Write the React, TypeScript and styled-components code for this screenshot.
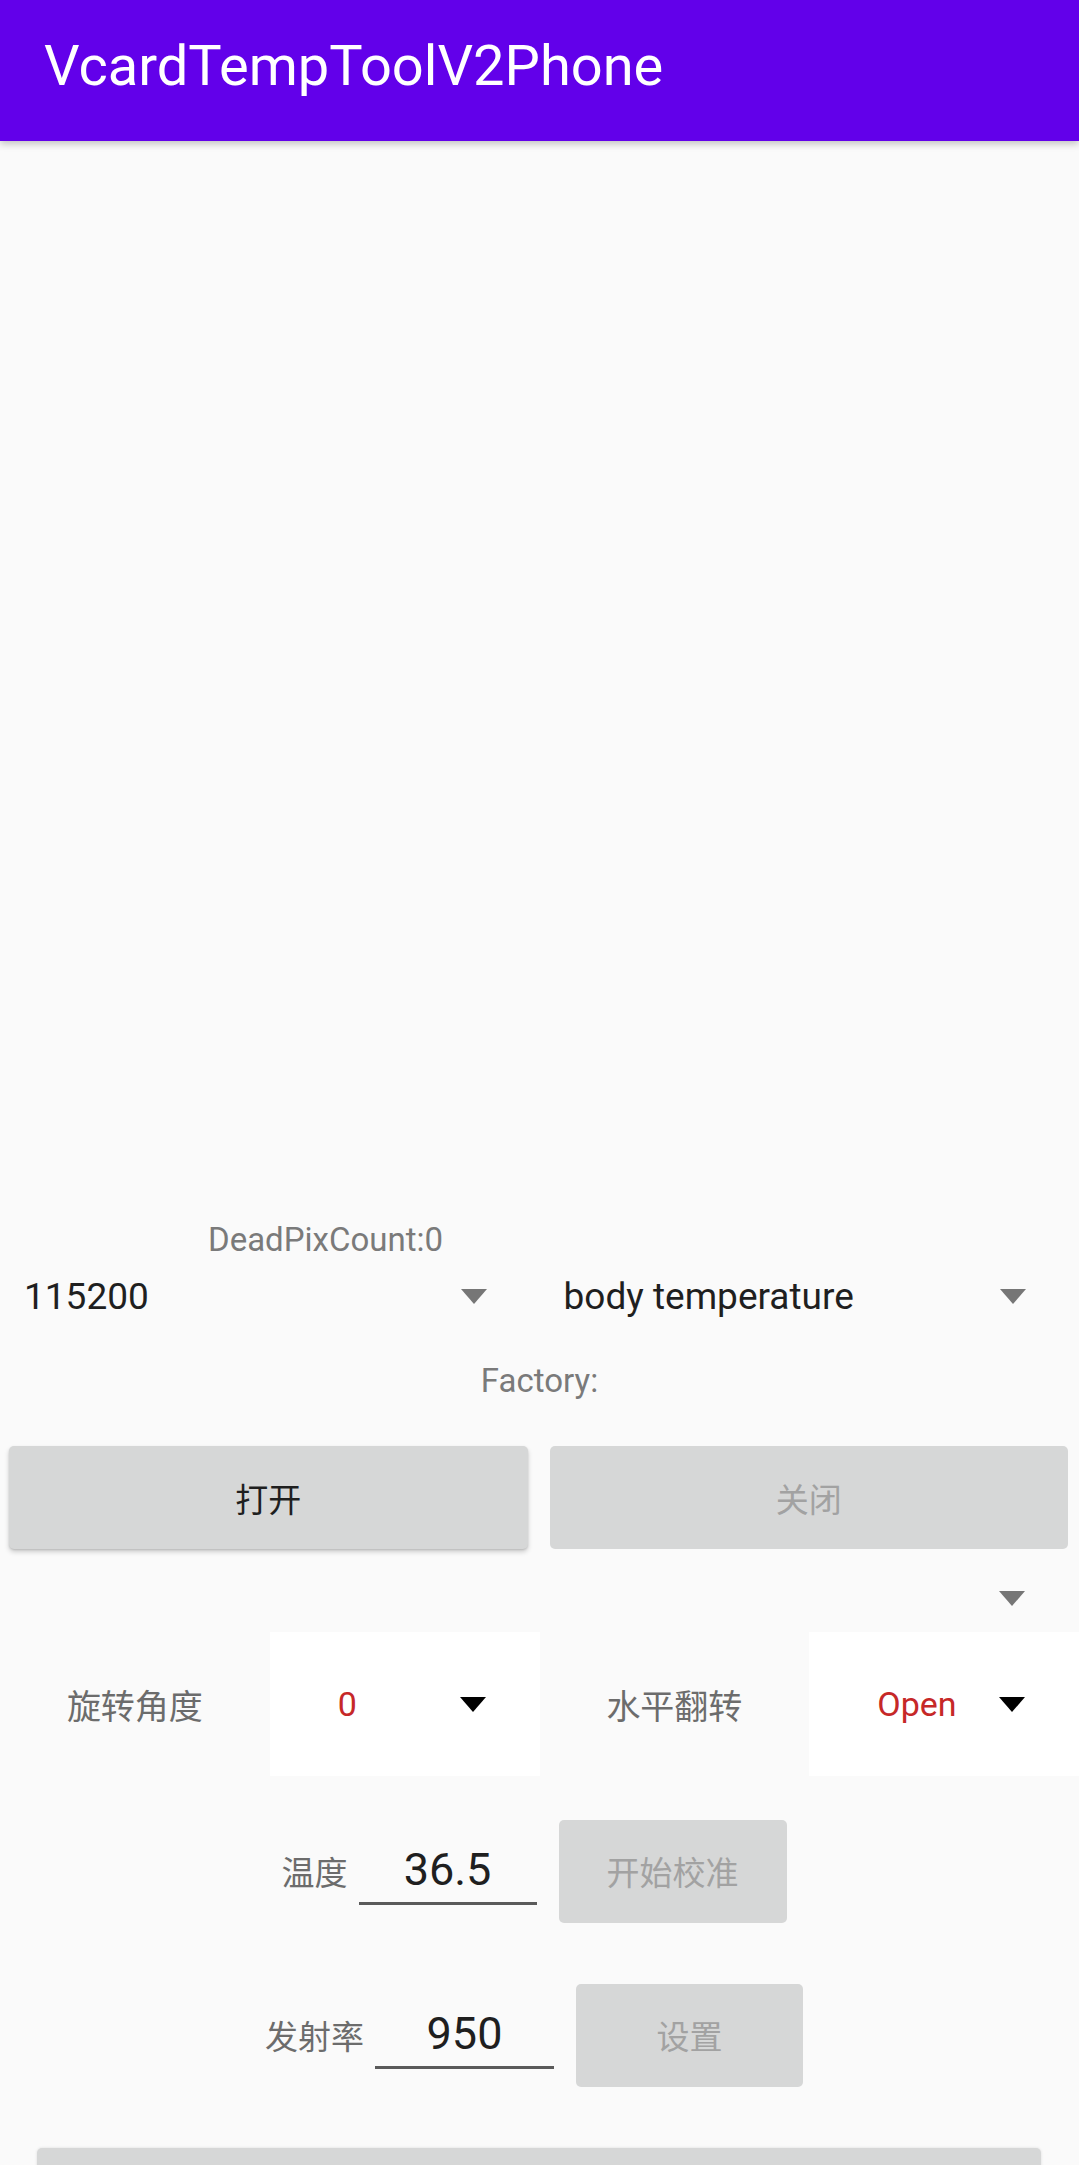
import React from "react";
import styled, { createGlobalStyle } from "styled-components";

const GlobalStyle = createGlobalStyle`
  html, body {
    margin: 0;
    padding: 0;
    background: #fafafa;
    overflow: hidden;
  }
  * { box-sizing: border-box; }
`;

const FONT = `Roboto, "Noto Sans CJK SC", "Noto Sans", sans-serif`;

const Screen = styled.div`
  width: 1079px;
  height: 2165px;
  overflow: hidden;
  background: #fafafa;
  font-family: ${FONT};
  display: flex;
  flex-direction: column;
`;

const AppBar = styled.header`
  height: 141px;
  flex: none;
  background: #6200ea;
  display: flex;
  align-items: center;
  padding: 0 0 10px 44px;
  box-shadow: 0 3px 7px rgba(0, 0, 0, 0.22);
  position: relative;
  z-index: 2;
`;

const Title = styled.h1`
  margin: 0;
  color: #ffffff;
  font-family: ${FONT};
  font-weight: 400;
  font-size: 56px;
  line-height: 1;
`;

const Preview = styled.div`
  height: 1074px;
  flex: none;
`;

const Row = styled.div<{ $h: number; $mt?: number }>`
  height: ${(p) => p.$h}px;
  margin-top: ${(p) => p.$mt ?? 0}px;
  flex: none;
  display: flex;
  align-items: center;
`;

const InfoText = styled.span<{ $pl?: number }>`
  font-size: 33px;
  line-height: 1;
  color: #7a7a7a;
  padding-left: ${(p) => p.$pl ?? 0}px;
`;

const CenterRow = styled(Row)`
  justify-content: center;
`;

const SpinnerHalf = styled.div`
  flex: 1;
  height: 100%;
  display: flex;
  align-items: center;
  justify-content: space-between;
  padding: 0 53px 0 24px;
`;

const SpinnerValue = styled.span`
  font-size: 37px;
  line-height: 1;
  color: #1f1f1f;
`;

const Caret = styled.span<{ $color: string }>`
  width: 0;
  height: 0;
  flex: none;
  border-left: 13px solid transparent;
  border-right: 13px solid transparent;
  border-top: 15px solid ${(p) => p.$color};
`;

const ButtonRow = styled.div`
  flex: none;
  display: flex;
  gap: 22px;
  padding: 16px 11px 16px 9px;
`;

const Button = styled.button<{ $disabled?: boolean; $w?: number }>`
  flex: ${(p) => (p.$w ? "none" : "1")};
  width: ${(p) => (p.$w ? `${p.$w}px` : "auto")};
  height: 103px;
  border: none;
  border-radius: 5px;
  background: #d6d7d7;
  font-family: ${FONT};
  font-size: 33px;
  color: ${(p) => (p.$disabled ? "#a2a2a2" : "#1f1f1f")};
  box-shadow: ${(p) =>
    p.$disabled
      ? "none"
      : "0 3px 5px rgba(0,0,0,0.18), 0 1px 2px rgba(0,0,0,0.12)"};
  padding: 0;
  display: flex;
  align-items: center;
  justify-content: center;
`;

const LoneSpinner = styled(Row)`
  justify-content: flex-end;
  padding-right: 54px;
`;

const OptionsGrid = styled.div`
  height: 144px;
  flex: none;
  display: grid;
  grid-template-columns: repeat(4, 1fr);
`;

const OptionLabel = styled.div`
  display: flex;
  align-items: center;
  justify-content: center;
  font-size: 34px;
  color: #6c6c6c;
`;

const OptionSpinner = styled.div`
  background: #ffffff;
  display: flex;
  align-items: center;
  justify-content: space-between;
  padding: 0 54px 0 68px;
`;

const OptionValue = styled.span`
  font-size: 34px;
  line-height: 1;
  color: #c62828;
`;

const FormRow = styled.div<{ $mt: number }>`
  flex: none;
  margin-top: ${(p) => p.$mt}px;
  height: 102px;
  display: flex;
  align-items: center;
  justify-content: center;
  padding-right: 11px;
`;

const FieldLabel = styled.span`
  font-size: 33px;
  color: #6c6c6c;
  margin-right: 11px;
`;

const EditField = styled.div<{ $w: number }>`
  width: ${(p) => p.$w}px;
  height: 68px;
  border-bottom: 3px solid #5a5a5a;
  display: flex;
  align-items: center;
  justify-content: center;
  font-size: 45px;
  color: #1f1f1f;
  margin-right: 22px;
`;

const WideButton = styled.div`
  flex: none;
  margin: 62px 38px 0 37px;
  height: 103px;
  border-radius: 5px;
  background: #d6d7d7;
  box-shadow: 0 0 3px rgba(0, 0, 0, 0.12);
`;

export default function App() {
  return (
    <Screen>
      <GlobalStyle />
      <AppBar>
        <Title>VcardTempToolV2Phone</Title>
      </AppBar>
      <Preview />
      <Row $h={48}>
        <InfoText $pl={208}>DeadPixCount:0</InfoText>
      </Row>
      <Row $h={67}>
        <SpinnerHalf>
          <SpinnerValue>115200</SpinnerValue>
          <Caret $color="#767676" />
        </SpinnerHalf>
        <SpinnerHalf>
          <SpinnerValue>body temperature</SpinnerValue>
          <Caret $color="#767676" />
        </SpinnerHalf>
      </Row>
      <CenterRow $h={100}>
        <InfoText>Factory:</InfoText>
      </CenterRow>
      <ButtonRow>
        <Button>打开</Button>
        <Button $disabled>关闭</Button>
      </ButtonRow>
      <LoneSpinner $h={67}>
        <Caret $color="#767676" />
      </LoneSpinner>
      <OptionsGrid>
        <OptionLabel>旋转角度</OptionLabel>
        <OptionSpinner>
          <OptionValue>0</OptionValue>
          <Caret $color="#000000" />
        </OptionSpinner>
        <OptionLabel>水平翻转</OptionLabel>
        <OptionSpinner>
          <OptionValue>Open</OptionValue>
          <Caret $color="#000000" />
        </OptionSpinner>
      </OptionsGrid>
      <FormRow $mt={44}>
        <FieldLabel>温度</FieldLabel>
        <EditField $w={178}>36.5</EditField>
        <Button $disabled $w={228}>开始校准</Button>
      </FormRow>
      <FormRow $mt={62}>
        <FieldLabel>发射率</FieldLabel>
        <EditField $w={179}>950</EditField>
        <Button $disabled $w={227}>设置</Button>
      </FormRow>
      <WideButton />
    </Screen>
  );
}
